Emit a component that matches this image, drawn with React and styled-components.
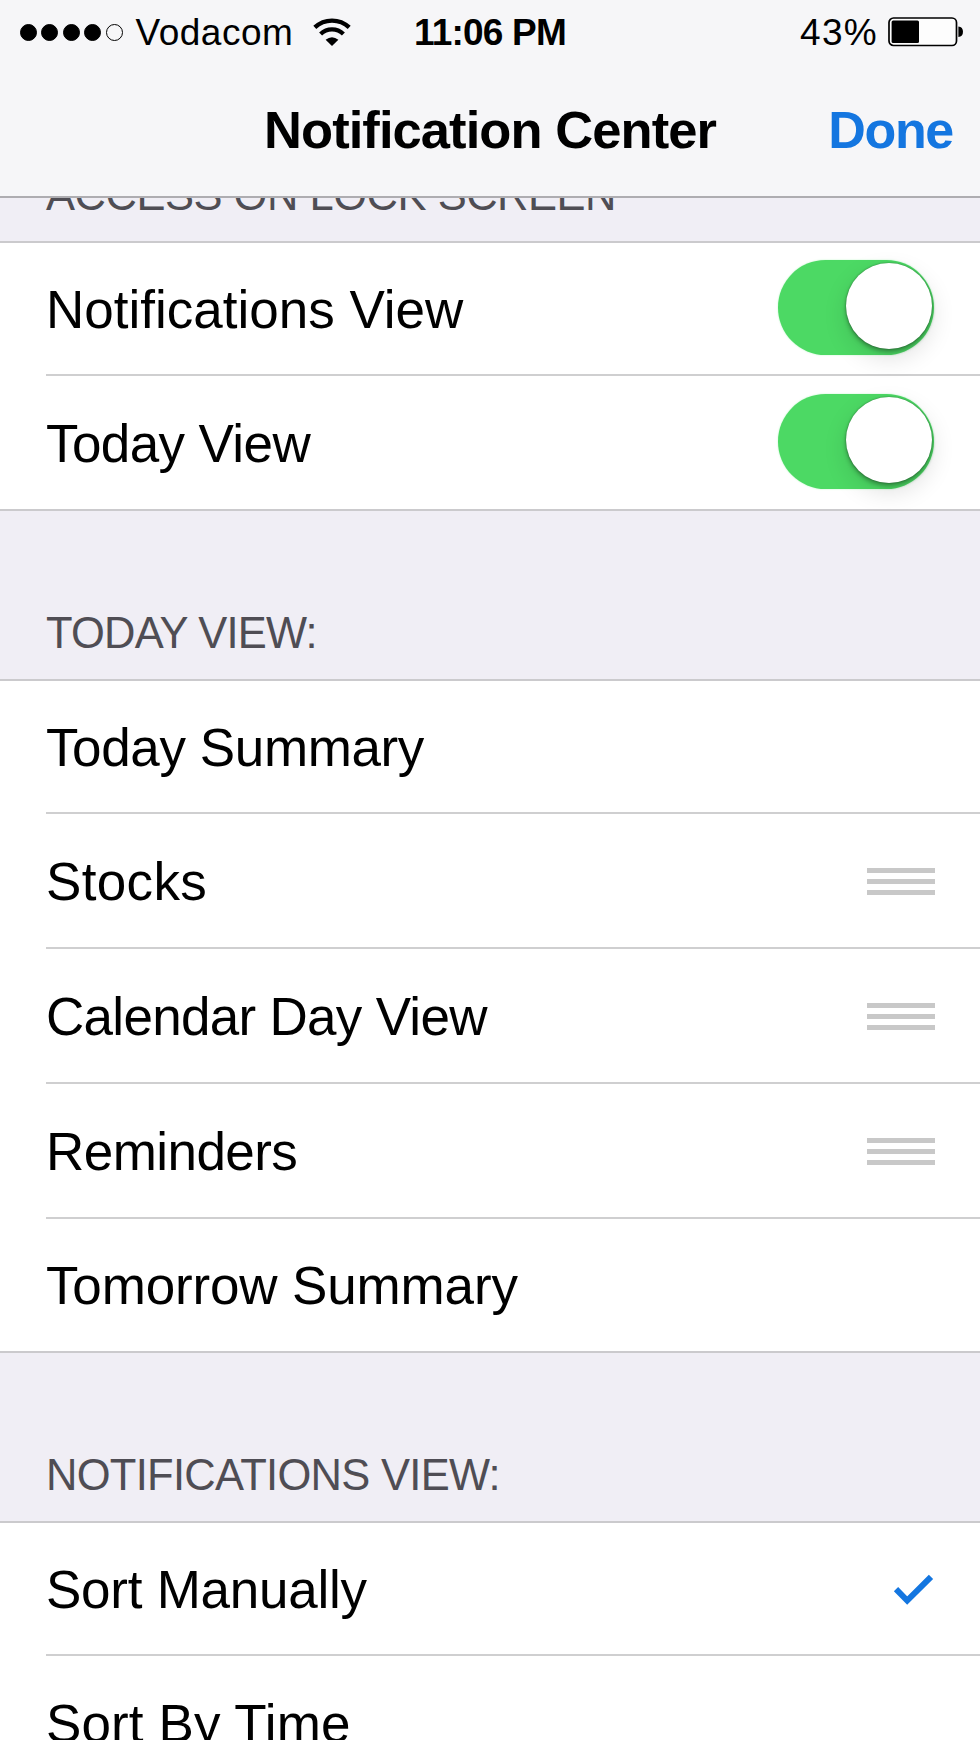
import React from "react";
import styled, { createGlobalStyle } from "styled-components";

const GlobalStyle = createGlobalStyle`
  html, body { margin: 0; padding: 0; background: #f0eef5; }
  *, *::before, *::after { box-sizing: border-box; }
`;

const Screen = styled.div`
  width: 980px;
  height: 1740px;
  overflow: hidden;
  display: flex;
  flex-direction: column;
  background: #f0eef5;
  color: #000;
  font-family: "Liberation Sans", Arial, sans-serif;
  font-kerning: normal;
`;

const TopBar = styled.header`
  flex: none;
  height: 198px;
  display: flex;
  flex-direction: column;
  background: #f6f6f8;
  border-bottom: 2px solid #aeadb1;
`;

const StatusBar = styled.div`
  height: 64px;
  display: grid;
  grid-template-columns: 1fr auto 1fr;
  align-items: center;
  padding: 0 16px 0 20px;
`;

const StatusSide = styled.div`
  display: flex;
  align-items: center;
  justify-content: ${(p) => (p.$end ? "flex-end" : "flex-start")};
`;

const StatusText = styled.span`
  font-size: 37px;
  line-height: 62px;
  padding-top: 2px;
  white-space: nowrap;
  font-weight: ${(p) => (p.$bold ? 700 : 400)};
  letter-spacing: ${(p) => p.$track || 0}px;
  margin: ${(p) => p.$margin || "0"};
`;

const SignalDots = styled.div`
  display: flex;
  gap: 4.4px;
`;

const Dot = styled.i`
  width: 17px;
  height: 17px;
  border-radius: 50%;
  border: 1.5px solid #000;
  background: ${(p) => (p.$on ? "#000" : "transparent")};
`;

const NavBar = styled.div`
  height: 132px;
  display: grid;
  grid-template-columns: 1fr auto 1fr;
  align-items: center;
  padding: 0 26px;
`;

const Title = styled.h1`
  grid-column: 2;
  margin: 0;
  font-size: 52.5px;
  line-height: 132px;
  font-weight: 700;
  letter-spacing: -0.93px;
`;

const DoneButton = styled.button`
  justify-self: end;
  border: 0;
  padding: 0;
  margin-right: 1px;
  background: none;
  font: 700 52px/132px "Liberation Sans", Arial, sans-serif;
  letter-spacing: -1.3px;
  color: #1476e0;
`;

const SectionHeader = styled.div`
  flex: none;
  height: ${(p) => p.$height}px;
  display: flex;
  flex-direction: column;
  justify-content: flex-end;
  overflow: hidden;
  padding: 0 46px 21px;
  font-size: 43.5px;
  line-height: 50px;
  color: #4f4d54;
  white-space: nowrap;
  letter-spacing: ${(p) => p.$track || 0}px;
`;

const Group = styled.section`
  flex: none;
  background: #fff;
  border-top: 2px solid #cbcacd;
  border-bottom: 2px solid #cbcacd;
`;

const Row = styled.div`
  height: ${(p) => p.$height}px;
  margin-left: 46px;
  padding-right: 45px;
  display: flex;
  align-items: center;
  justify-content: space-between;
  & + & { border-top: 2px solid #cfcfd0; }
`;

const Label = styled.span`
  font-size: 53px;
  line-height: 60px;
  padding-top: 2px;
  white-space: nowrap;
  letter-spacing: ${(p) => (p.$track ? `${p.$track}px` : "normal")};
`;

const Switch = styled.div`
  width: 156px;
  height: 95px;
  margin: 0 1px 3px 0;
  border-radius: 48px;
  background: #4cd964;
  display: flex;
  justify-content: flex-end;
  padding: 3px 2px 0 0;
  box-shadow: 0 0 2px #b9f5c4;
`;

const Knob = styled.div`
  width: 86px;
  height: 86px;
  border-radius: 50%;
  background: #fff;
  box-shadow: 0 3px 4px rgba(0, 0, 0, 0.3), 0 0 2px rgba(0, 0, 0, 0.4), 0 9px 24px rgba(0, 0, 0, 0.12);
`;

const Handle = styled.div`
  width: 68px;
  display: flex;
  flex-direction: column;
  gap: 6px;
  margin-top: 2px;
`;

const Grip = styled.i`
  height: 5px;
  background: #c8c8c8;
`;

const Wifi = () => (
  <svg width="38" height="28" viewBox="0 0 38 28" fill="none" stroke="#000" strokeWidth="4.3">
    <path d="M1.8 9.4 A25 25 0 0 1 36.2 9.4" />
    <path d="M7.6 16 A16.4 16.4 0 0 1 30.4 16" />
    <path d="M12.6 21.8 Q19 16.6 25.4 21.8 L19 28 Z" fill="#000" stroke="none" />
  </svg>
);

const Battery = () => (
  <svg width="76" height="30" viewBox="0 0 76 30">
    <rect x="1" y="1" width="67.5" height="27.5" rx="4.5" fill="#fdfdfd" stroke="#000" strokeWidth="1.7" />
    <rect x="3.6" y="3.6" width="27.4" height="22.4" rx="1.5" />
    <path d="M70.4 9.5 Q75 10 75 14.8 Q75 19.6 70.4 20.1 Z" />
  </svg>
);

const CheckIcon = styled.svg`
  width: 42px;
  height: 34px;
  margin-top: 2px;
`;

const Check = () => (
  <CheckIcon viewBox="0 0 42 34">
    <path d="M3 16.2 L14.2 27.6 L38 3.8" fill="none" stroke="#1476e0" strokeWidth="6" />
  </CheckIcon>
);

const Accessory = ({ kind }) => {
  if (kind === "switch") return <Switch><Knob /></Switch>;
  if (kind === "handle") return <Handle><Grip /><Grip /><Grip /></Handle>;
  if (kind === "check") return <Check />;
  return null;
};

const sections = [
  {
    title: "ACCESS ON LOCK SCREEN", height: 43, track: -0.48,
    rows: [
      { label: "Notifications View", kind: "switch", height: 131 },
      { label: "Today View", kind: "switch", height: 135, track: -0.6 },
    ],
  },
  {
    title: "TODAY VIEW:", height: 168, track: -0.8,
    rows: [
      { label: "Today Summary", height: 131, track: -0.38 },
      { label: "Stocks", kind: "handle", height: 135, track: 0.35 },
      { label: "Calendar Day View", kind: "handle", height: 135, track: -0.7 },
      { label: "Reminders", kind: "handle", height: 135, track: -0.55 },
      { label: "Tomorrow Summary", height: 134, track: -0.15 },
    ],
  },
  {
    title: "NOTIFICATIONS VIEW:", height: 168, track: -0.7,
    rows: [
      { label: "Sort Manually", kind: "check", height: 131, track: -0.25 },
      { label: "Sort By Time", height: 135, track: 0.1 },
    ],
  },
];

export default function App() {
  return (
    <>
      <GlobalStyle />
      <Screen>
        <TopBar>
          <StatusBar>
            <StatusSide>
              <SignalDots>
                {[1, 1, 1, 1, 0].map((on, i) => <Dot key={i} $on={on} />)}
              </SignalDots>
              <StatusText $track={0.5} $margin="0 20px 0 13px">Vodacom</StatusText>
              <Wifi />
            </StatusSide>
            <StatusText $bold $track={-0.8} $margin="0 4px 0 0">11:06 PM</StatusText>
            <StatusSide $end>
              <StatusText $track={1.3} $margin="0 10px 0 0">43%</StatusText>
              <Battery />
            </StatusSide>
          </StatusBar>
          <NavBar>
            <Title>Notification Center</Title>
            <DoneButton>Done</DoneButton>
          </NavBar>
        </TopBar>
        {sections.map((s) => (
          <React.Fragment key={s.title}>
            <SectionHeader $height={s.height} $track={s.track}>{s.title}</SectionHeader>
            <Group>
              {s.rows.map((r) => (
                <Row key={r.label} $height={r.height}>
                  <Label $track={r.track}>{r.label}</Label>
                  <Accessory kind={r.kind} />
                </Row>
              ))}
            </Group>
          </React.Fragment>
        ))}
      </Screen>
    </>
  );
}
